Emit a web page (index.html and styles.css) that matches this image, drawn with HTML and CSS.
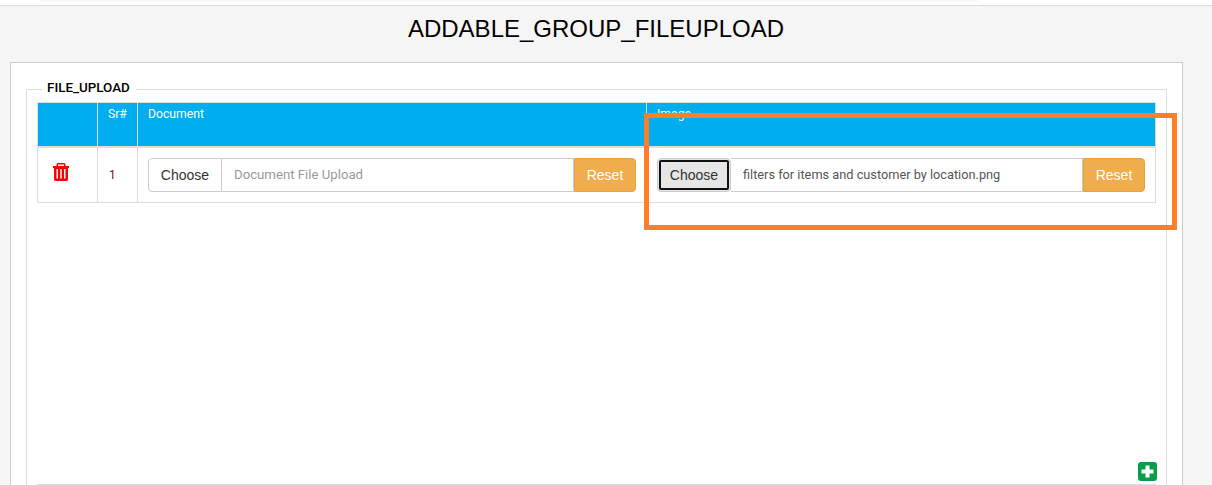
FILE: index.html
```html
<!DOCTYPE html>
<html lang="en">
<head>
<meta charset="utf-8">
<title>ADDABLE_GROUP_FILEUPLOAD</title>
<link rel="stylesheet" href="styles.css">
</head>
<body>
<div class="topbar"><div class="topstrip"></div></div>
<main class="content">
  <h1 class="title">ADDABLE_GROUP_FILEUPLOAD</h1>
  <section class="panel">
    <fieldset class="group">
      <legend class="legend">FILE_UPLOAD</legend>
      <table class="grid">
        <colgroup>
          <col class="col-action"><col class="col-sr"><col class="col-file"><col class="col-file">
        </colgroup>
        <thead>
          <tr><th></th><th>Sr#</th><th>Document</th><th>Image</th></tr>
        </thead>
        <tbody>
          <tr>
            <td class="cell-icon">
              <svg class="trash" viewBox="0 0 16 18" aria-hidden="true"><path fill="#f00" fill-rule="evenodd" d="M5 0h6a1.500 1.500 0 0 1 1.500 1.500V3h3a.5.500 0 0 1 .5.500v1.500h-1v11.500a1.500 1.500 0 0 1-1.500 1.500h-11A1.500 1.500 0 0 1 1 16.500V5H0V3.500A.5.500 0 0 1 .5 3h3V1.500A1.500 1.500 0 0 1 5 0zm0 1.500V3h6V1.500zM3.500 6v9.500h1.500V6zm3.750 0v9.500h1.500V6zM11 6v9.500h1.500V6z"/></svg>
            </td>
            <td class="cell-sr">1</td>
            <td class="cell-file">
              <div class="upload">
                <button class="choose" type="button">Choose</button>
                <span class="filename placeholder">Document File Upload</span>
                <button class="reset" type="button">Reset</button>
              </div>
            </td>
            <td class="cell-file">
              <div class="upload">
                <button class="choose focused" type="button">Choose</button>
                <span class="filename">filters for items and customer by location.png</span>
                <button class="reset" type="button">Reset</button>
              </div>
            </td>
          </tr>
        </tbody>
      </table>
      <div class="spacer">
        <svg class="add" viewBox="0 0 19 19" aria-hidden="true"><rect width="19" height="19" rx="3" fill="#0a9e4b"/><path fill="#fff" d="M7.500 3.500h4v4h4v4h-4v4h-4v-4h-4v-4h4z"/></svg>
      </div>
      <div class="rule"></div>
    </fieldset>
  </section>
</main>
<div class="highlight"></div>
</body>
</html>
```
FILE: styles.css
```css
* { box-sizing: border-box; }
html, body { margin: 0; height: 485px; overflow: hidden; }
body {
  background: #f5f5f5;
  font-family: "Liberation Sans", Arial, sans-serif;
  color: #333;
  position: relative;
}
.topbar {
  height: 6px;
  background: #fff;
  border-bottom: 1px solid #ddd;
  padding: 0 234px 0 40px;
}
.topstrip { height: 1px; background: #f5f5f5; }
.content { padding: 0 29px 0 10px; }
.title {
  margin: 0;
  height: 56px;
  padding-top: 10px;
  font-size: 24px;
  line-height: 26px;
  font-weight: 400;
  color: #000;
  text-align: center;
  padding-right: 1px;
}
.panel {
  width: 1173px;
  height: 440px;
  background: #fff;
  border: 1px solid #ccc;
  padding: 18px 15px 0;
}
.group {
  margin: 0;
  padding: 0 10px;
  height: 420px;
  border: 1px solid #ddd;
  min-width: 0;
}
.legend {
  margin-left: 5px;
  padding: 0 6px 2px 5px;
  font-family: Roboto, "Liberation Sans", sans-serif;
  font-size: 13.400px;
  font-weight: 500;
  line-height: 14px;
  color: #000;
}
.grid {
  width: 1119px;
  border-collapse: collapse;
  table-layout: fixed;
  margin-top: 5px;
}
.col-action { width: 60px; }
.col-sr { width: 40px; }
.col-file { width: 509px; }
.grid th {
  height: 44px;
  padding: 4px 10px 0;
  background: #00aeef;
  border: 1px solid #ddd;
  border-bottom-width: 2px;
  color: #fff;
  font-family: Roboto, "Liberation Sans", sans-serif;
  font-size: 12.200px;
  font-weight: 400;
  line-height: 14px;
  text-align: left;
  vertical-align: top;
}
.grid td {
  height: 56px;
  padding: 1px 10px 0;
  border: 1px solid #ddd;
  vertical-align: middle;
}
.cell-icon { line-height: 0; padding-left: 15px !important; }
.trash { width: 16px; height: 18px; margin-top: -6px; }
.cell-sr {
  font-family: Roboto, "Liberation Sans", sans-serif;
  font-size: 12px;
  color: #800040;
  padding-left: 11px !important;
}
.upload { display: flex; height: 34px; }
.choose {
  width: 74px;
  height: 34px;
  padding: 0;
  background: #fff;
  border: 1px solid #ccc;
  border-radius: 4px 0 0 4px;
  font: 14px "Liberation Sans", Arial, sans-serif;
  color: #333;
}
.choose.focused {
  background: #e6e6e6;
  outline: 2px solid #111;
  outline-offset: -4px;
  border-radius: 4px;
}
.filename {
  flex: 1;
  min-width: 0;
  padding: 0 12px;
  border: 1px solid #ccc;
  border-left: 0;
  font-family: Roboto, "Liberation Sans", sans-serif;
  font-size: 12.750px;
  line-height: 32px;
  color: #555;
}
.placeholder { font-size: 13.200px; color: #999; }
.reset {
  width: 62px;
  height: 34px;
  padding: 0;
  background: #f0ad4e;
  border: 1px solid #eea236;
  border-radius: 0 4px 4px 0;
  color: #fff;
  font: 14px "Liberation Sans", Arial, sans-serif;
}
.spacer {
  display: flex;
  justify-content: flex-end;
  height: 281px;
  padding: 259px 0 0;
  margin-right: -1px;
}
.add { width: 19px; height: 19px; }
.rule { height: 1px; background: #ddd; width: 1119px; }
.highlight {
  position: absolute;
  left: 644px;
  top: 113px;
  width: 533px;
  height: 117px;
  border: 5px solid #fd7f28;
}
```
